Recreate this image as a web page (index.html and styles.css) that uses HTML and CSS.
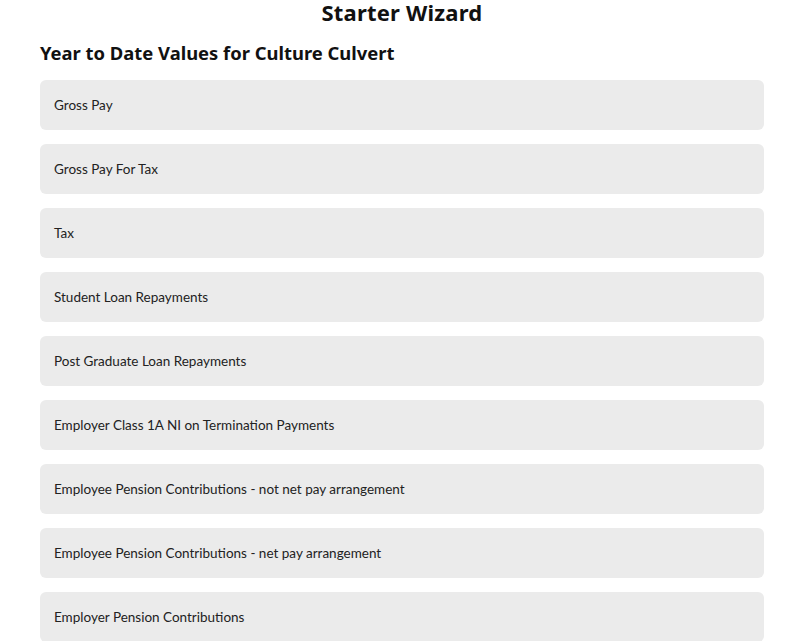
FILE: index.html
```html
<!DOCTYPE html>
<html>
<head>
<meta charset="utf-8">
<link rel="stylesheet" href="styles.css">
</head>
<body>
<div class="page">
  <h1 class="title">Starter Wizard</h1>
  <h2 class="subtitle">Year to Date Values for Culture Culvert</h2>
  <div class="list">
    <div class="item">Gross Pay</div>
    <div class="item">Gross Pay For Tax</div>
    <div class="item">Tax</div>
    <div class="item">Student Loan Repayments</div>
    <div class="item">Post Graduate Loan Repayments</div>
    <div class="item">Employer Class 1A NI on Termination Payments</div>
    <div class="item">Employee Pension Contributions - not net pay arrangement</div>
    <div class="item">Employee Pension Contributions - net pay arrangement</div>
    <div class="item">Employer Pension Contributions</div>
  </div>
</div>
</body>
</html>
```
FILE: styles.css
```css
html, body { margin: 0; padding: 0; background: #fff; }
body { font-family: Lato, "Noto Sans", sans-serif; color: #222; overflow: hidden; }
.page { padding: 0 36px 0 40px; }
.title {
  margin: 0;
  height: 24px;
  line-height: 24px;
  text-align: center;
  font-family: "Noto Sans", Lato, sans-serif;
  font-weight: 700;
  font-size: 22px;
  color: #111;
  letter-spacing: 0.2px;
}
.subtitle {
  margin: 16px 0 0 0;
  height: 26px;
  line-height: 26px;
  font-family: "Noto Sans", Lato, sans-serif;
  font-weight: 700;
  font-size: 18.4px;
  color: #111;
}
.list { display: flex; flex-direction: column; gap: 14px; margin-top: 14px; }
.item {
  height: 50px;
  flex: none;
  box-sizing: border-box;
  display: flex;
  align-items: center;
  padding: 0 14px;
  background: #ebebeb;
  border-radius: 6px;
  font-size: 13.5px;
  color: #222;
}
```
